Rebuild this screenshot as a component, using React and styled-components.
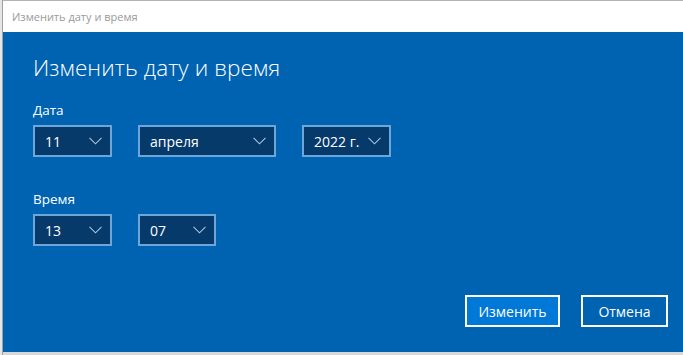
import React from 'react'
import styled, { createGlobalStyle } from 'styled-components';

const Global = createGlobalStyle`
    html, body{
        margin: 0;
        padding: 0;
        background: #c9c9c9;
        overflow: hidden;
    }
    body{
        font-family: "Open Sans", "Noto Sans", "Liberation Sans", sans-serif;
    }
`

const Screen = styled.div`
    width: 683px;
    height: 355px;
    display: flex;
    background: #d8d8d8;

    .w-edge{
        width: 3px;
        background: #e6e6e6;
        border-right: 1px solid #a0a0a0;
        box-sizing: border-box;
    }
`

const Window = styled.div`
    flex: 1;
    display: flex;
    flex-direction: column;
    height: 352px;
    border-top: 1px solid #b4b4b4;
    box-sizing: border-box;
`

const TitleBar = styled.div`
    height: 31px;
    background: white;
    display: flex;
    align-items: center;
    padding-left: 9px;
    font-size: 11px;
    color: #9a9a9a;
`

const Panel = styled.div`
    flex: 1;
    background: #0063b1;
    color: white;
    padding: 20px 15px 0 30px;
    display: flex;
    flex-direction: column;
`

const Heading = styled.h1`
    margin: 0;
    font-weight: 300;
    font-size: 22.5px;
    line-height: 32px;
    letter-spacing: 0.1px;
`

const Label = styled.div`
    font-size: 13.5px;
    line-height: 18px;
    margin-top: ${p => p.top}px;
`

const Row = styled.div`
    display: flex;
    gap: 26px;
    margin-top: 6px;
`

const Select = styled.div`
    width: ${p => p.w}px;
    height: 32px;
    box-sizing: border-box;
    border: 2px solid #6fa6da;
    background: #063a6a;
    display: flex;
    align-items: center;
    justify-content: space-between;
    padding: 0 8px 0 10px;
    font-size: 14px;

    svg{
        flex-shrink: 0;
    }
`

const Buttons = styled.div`
    margin-top: auto;
    margin-bottom: 25px;
    display: flex;
    justify-content: flex-end;
    gap: 21px;
`

const Button = styled.div`
    width: ${p => p.w}px;
    height: 32px;
    box-sizing: border-box;
    border: 2px solid white;
    background: ${p => p.primary ? '#0078d7' : '#0063b1'};
    display: flex;
    align-items: center;
    justify-content: center;
    font-size: 14px;
`

function Chevron(){
    return (
        <svg width="13" height="8" viewBox="0 0 13 8">
            <path d="M0.5 0.8 L6.5 6.8 L12.5 0.8" fill="none" stroke="#a9c6e2" strokeWidth="1.1" />
        </svg>
    );
}

function Dropdown({ w, value }){
    return (
        <Select w={w}>
            <span>{value}</span>
            <Chevron />
        </Select>
    );
}

function App() {
    return (
        <Screen>
            <Global />
            <div className="w-edge"></div>
            <Window>
                <TitleBar>Изменить дату и время</TitleBar>
                <Panel>
                    <Heading>Изменить дату и время</Heading>
                    <Label top={17}>Дата</Label>
                    <Row>
                        <Dropdown w={79} value="11" />
                        <Dropdown w={138} value="апреля" />
                        <Dropdown w={89} value="2022 г." />
                    </Row>
                    <Label top={33}>Время</Label>
                    <Row>
                        <Dropdown w={79} value="13" />
                        <Dropdown w={78} value="07" />
                    </Row>
                    <Buttons>
                        <Button primary w={95}>Изменить</Button>
                        <Button w={87}>Отмена</Button>
                    </Buttons>
                </Panel>
            </Window>
        </Screen>
    );
}

export default App;
